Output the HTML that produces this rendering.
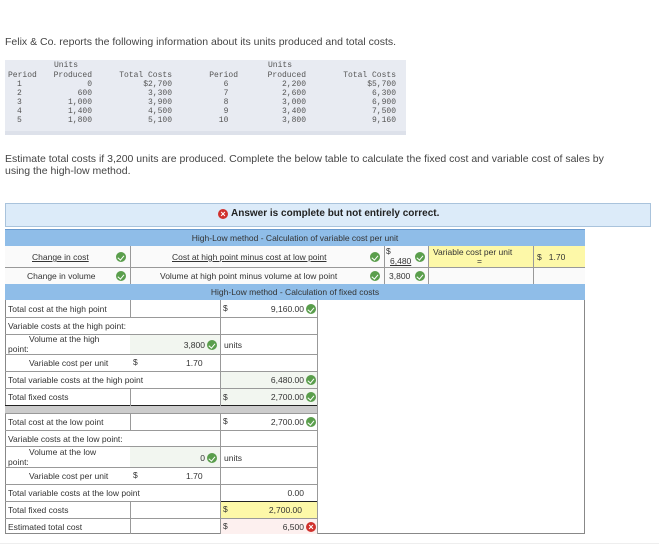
<!DOCTYPE html>
<html><head><meta charset="utf-8"><style>
body{margin:0;width:659px;height:551px;background:#fff;position:relative;overflow:hidden;font-family:"Liberation Sans",sans-serif;color:#333}
.a{position:absolute;white-space:nowrap}
.m{font-family:"Liberation Mono",monospace;font-size:8px;color:#555;text-align:right}
.t{font-size:8.5px;color:#333}
.ck{position:absolute;width:10px;height:10px;border-radius:50%;background:#5a9e4c}
.ck:after{content:"";position:absolute;left:3px;top:1.5px;width:2.5px;height:5px;border:solid #fff;border-width:0 1.6px 1.6px 0;transform:rotate(40deg)}
.x{position:absolute;width:10px;height:10px;border-radius:50%;background:#d0312d;color:#fff;font-size:9px;line-height:10px;text-align:center;font-weight:bold}
.h{position:absolute;background:#999}
.box{position:absolute;box-sizing:border-box}
</style></head><body>
<div class="a" style="left:5px;top:36px;font-size:10.5px;color:#444">Felix &amp; Co. reports the following information about its units produced and total costs.</div>
<div class="box" style="left:5px;top:60px;width:401px;height:75px;background:#e8ebf2"></div>
<div class="box" style="left:5px;top:131px;width:401px;height:4px;background:#dde1ea"></div>
<div class="a m" style="left:40px;top:61px;width:52px;text-align:center">Units</div>
<div class="a m" style="left:254px;top:61px;width:52px;text-align:center">Units</div>
<div class="a m" style="left:8px;top:71px;text-align:left;line-height:9px">Period<br><span style="padding-left:9px">1</span><br><span style="padding-left:9px">2</span><br><span style="padding-left:9px">3</span><br><span style="padding-left:9px">4</span><br><span style="padding-left:9px">5</span></div>
<div class="a m" style="left:50px;top:71px;width:42px;line-height:9px">Produced<br>0<br>600<br>1,000<br>1,400<br>1,800</div>
<div class="a m" style="left:118px;top:71px;width:54px;line-height:9px">Total Costs<br>$2,700<br>3,300<br>3,900<br>4,500<br>5,100</div>
<div class="a m" style="left:204px;top:71px;width:34px;line-height:9px">Period<br>6&nbsp;&nbsp;<br>7&nbsp;&nbsp;<br>8&nbsp;&nbsp;<br>9&nbsp;&nbsp;<br>10&nbsp;&nbsp;</div>
<div class="a m" style="left:264px;top:71px;width:42px;line-height:9px">Produced<br>2,200<br>2,600<br>3,000<br>3,400<br>3,800</div>
<div class="a m" style="left:342px;top:71px;width:54px;line-height:9px">Total Costs<br>$5,700<br>6,300<br>6,900<br>7,500<br>9,160</div>
<div class="a" style="left:5px;top:153px;font-size:10.5px;color:#444;line-height:12px">Estimate total costs if 3,200 units are produced. Complete the below table to calculate the fixed cost and variable cost of sales by<br>using the high-low method.</div>

<div class="box" style="left:5px;top:203px;width:646px;height:24px;background:#dcebf9;border:1px solid #a9c3dc"></div>
<div class="x" style="left:218px;top:209px">×</div>
<div class="a" style="left:231px;top:208px;font-size:10px;font-weight:bold;color:#222">Answer is complete but not entirely correct.</div>

<div class="box" style="left:5px;top:229px;width:580px;height:305px;border:1px solid #888;border-top:none"></div>
<div class="box" style="left:5px;top:229px;width:580px;height:17px;background:#8fbde8;border-top:1px solid #6a9bd0"></div>
<div class="a t" style="left:5px;top:233px;width:580px;text-align:center">High-Low method - Calculation of variable cost per unit</div>
<div class="box" style="left:5px;top:246px;width:580px;height:38px;background:#fafafa"></div>
<div class="box" style="left:428px;top:246px;width:157px;height:21px;background:#fdf8a8"></div>
<div class="h" style="left:5px;top:267px;width:580px;height:1px"></div>
<div class="h" style="left:130px;top:246px;width:1px;height:38px"></div>
<div class="h" style="left:384px;top:246px;width:1px;height:38px"></div>
<div class="h" style="left:428px;top:246px;width:1px;height:38px"></div>
<div class="h" style="left:533px;top:246px;width:1px;height:38px"></div>
<div class="a t" style="left:32px;top:252px;text-decoration:underline">Change in cost</div><div class="ck" style="left:116px;top:252px"></div>
<div class="a t" style="left:27px;top:271px">Change in volume</div><div class="ck" style="left:116px;top:271px"></div>
<div class="a t" style="left:172px;top:252px;text-decoration:underline">Cost at high point minus cost at low point</div><div class="ck" style="left:370px;top:252px"></div>
<div class="a t" style="left:160px;top:271px">Volume at high point minus volume at low point</div><div class="ck" style="left:370px;top:271px"></div>
<div class="a t" style="left:386px;top:246px">$</div>
<div class="a t" style="left:390px;top:256px;text-decoration:underline">6,480</div><div class="ck" style="left:415px;top:252px"></div>
<div class="a t" style="left:389px;top:271px">3,800</div><div class="ck" style="left:415px;top:271px"></div>
<div class="a t" style="left:433px;top:247px">Variable cost per unit</div>
<div class="a t" style="left:477px;top:256px">=</div>
<div class="a t" style="left:537px;top:252px">$&nbsp;&nbsp;&nbsp;1.70</div>
<div class="box" style="left:5px;top:284px;width:580px;height:16px;background:#8fbde8"></div>
<div class="a t" style="left:5px;top:287px;width:580px;text-align:center">High-Low method - Calculation of fixed costs</div>

<div class="h" style="left:317px;top:300px;width:1px;height:234px"></div>
<div class="box" style="left:130px;top:334px;width:90px;height:20px;background:#f2f6f0"></div>
<div class="box" style="left:220px;top:371px;width:97px;height:35px;background:#f2f6f0"></div>
<div class="box" style="left:130px;top:446px;width:90px;height:21px;background:#f2f6f0"></div>
<div class="box" style="left:220px;top:501px;width:97px;height:17px;background:#fdf8a8"></div>
<div class="box" style="left:220px;top:518px;width:97px;height:16px;background:#fdf0ef"></div>
<div class="box" style="left:5px;top:406px;width:312px;height:7px;background:#ccc"></div>
<div class="h" style="left:5px;top:317px;width:312px;height:1px"></div>
<div class="h" style="left:5px;top:334px;width:312px;height:1px"></div>
<div class="h" style="left:5px;top:354px;width:312px;height:1px"></div>
<div class="h" style="left:5px;top:371px;width:312px;height:1px"></div>
<div class="h" style="left:5px;top:388px;width:312px;height:1px"></div>
<div class="h" style="left:5px;top:405px;width:312px;height:1px;background:#222"></div>
<div class="h" style="left:5px;top:413px;width:312px;height:1px"></div>
<div class="h" style="left:5px;top:430px;width:312px;height:1px"></div>
<div class="h" style="left:5px;top:446px;width:312px;height:1px"></div>
<div class="h" style="left:5px;top:467px;width:312px;height:1px"></div>
<div class="h" style="left:5px;top:484px;width:312px;height:1px"></div>
<div class="h" style="left:5px;top:501px;width:312px;height:1px"></div>
<div class="h" style="left:220px;top:501px;width:97px;height:1px;background:#222"></div>
<div class="h" style="left:5px;top:518px;width:312px;height:1px"></div>
<div class="h" style="left:130px;top:300px;width:1px;height:17px"></div>
<div class="h" style="left:220px;top:300px;width:1px;height:17px"></div>
<div class="h" style="left:220px;top:317px;width:1px;height:17px"></div>
<div class="h" style="left:220px;top:334px;width:1px;height:20px"></div>
<div class="h" style="left:220px;top:354px;width:1px;height:17px"></div>
<div class="h" style="left:220px;top:371px;width:1px;height:35px"></div>
<div class="h" style="left:130px;top:388px;width:1px;height:18px"></div>
<div class="h" style="left:130px;top:413px;width:1px;height:17px"></div>
<div class="h" style="left:220px;top:413px;width:1px;height:71px"></div>
<div class="h" style="left:220px;top:484px;width:1px;height:50px"></div>
<div class="h" style="left:130px;top:501px;width:1px;height:33px"></div>

<div class="a t" style="left:8px;top:304px">Total cost at the high point</div>
<div class="a t" style="left:223px;top:303px">$</div><div class="a t" style="left:270px;top:304px;width:34px;text-align:right">9,160.00</div><div class="ck" style="left:306px;top:304px"></div>
<div class="a t" style="left:8px;top:321px">Variable costs at the high point:</div>
<div class="a t" style="left:29px;top:334px">Volume at the high</div><div class="a t" style="left:8px;top:344px">point:</div>
<div class="a t" style="left:160px;top:340px;width:45px;text-align:right">3,800</div><div class="ck" style="left:207px;top:340px"></div>
<div class="a t" style="left:224px;top:340px">units</div>
<div class="a t" style="left:29px;top:358px">Variable cost per unit</div><div class="a t" style="left:133px;top:357px">$</div><div class="a t" style="left:186px;top:358px">1.70</div>
<div class="a t" style="left:8px;top:375px">Total variable costs at the high point</div>
<div class="a t" style="left:270px;top:375px;width:34px;text-align:right">6,480.00</div><div class="ck" style="left:306px;top:375px"></div>
<div class="a t" style="left:8px;top:392px">Total fixed costs</div>
<div class="a t" style="left:223px;top:392px">$</div><div class="a t" style="left:270px;top:392px;width:34px;text-align:right">2,700.00</div><div class="ck" style="left:306px;top:392px"></div>
<div class="a t" style="left:8px;top:417px">Total cost at the low point</div>
<div class="a t" style="left:223px;top:416px">$</div><div class="a t" style="left:270px;top:417px;width:34px;text-align:right">2,700.00</div><div class="ck" style="left:306px;top:417px"></div>
<div class="a t" style="left:8px;top:434px">Variable costs at the low point:</div>
<div class="a t" style="left:29px;top:447px">Volume at the low</div><div class="a t" style="left:8px;top:457px">point:</div>
<div class="a t" style="left:160px;top:453px;width:45px;text-align:right">0</div><div class="ck" style="left:207px;top:453px"></div>
<div class="a t" style="left:224px;top:453px">units</div>
<div class="a t" style="left:29px;top:471px">Variable cost per unit</div><div class="a t" style="left:133px;top:470px">$</div><div class="a t" style="left:186px;top:471px">1.70</div>
<div class="a t" style="left:8px;top:488px">Total variable costs at the low point</div>
<div class="a t" style="left:270px;top:488px;width:34px;text-align:right">0.00</div>
<div class="a t" style="left:8px;top:505px">Total fixed costs</div>
<div class="a t" style="left:223px;top:504px">$</div><div class="a t" style="left:268px;top:505px;width:34px;text-align:right">2,700.00</div>
<div class="a t" style="left:8px;top:522px">Estimated total cost</div>
<div class="a t" style="left:223px;top:521px">$</div><div class="a t" style="left:270px;top:522px;width:34px;text-align:right">6,500</div><div class="x" style="left:306px;top:522px">×</div>
<div class="box" style="left:0;top:543px;width:659px;height:1px;background:#eee"></div>
</body></html>
